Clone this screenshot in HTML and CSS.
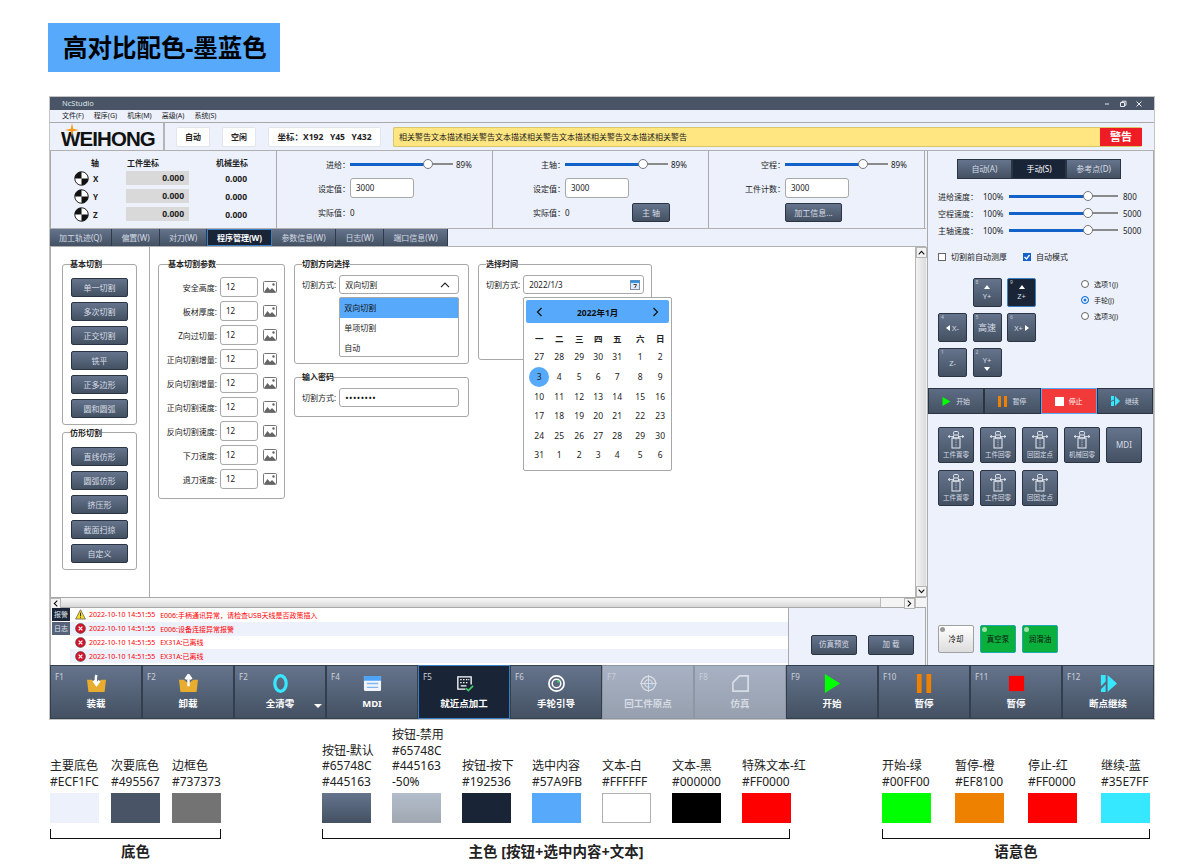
FILE: index.html
```html
<!DOCTYPE html>
<html lang="zh-CN">
<head>
    <meta charset="UTF-8">
    <meta name="viewport" content="width=device-width, initial-scale=1.0">
    <title>高对比配色-墨蓝色</title>
    <link rel="stylesheet" href="styles.css">
</head>
<body>
    <h1 class="page-title">高对比配色-墨蓝色</h1>

    <div class="app">
        <div class="titlebar">
            <span>NcStudio</span>
            <div class="win-btns">
                <svg width="8" height="8" viewBox="0 0 8 8"><path d="M2 4h4" stroke="#e6e9ef" stroke-width="1"/></svg>
                <svg width="8" height="8" viewBox="0 0 8 8"><path d="M1.5 2.5h4v4h-4zM3 2.5V1.2h4v4H5.5" fill="none" stroke="#e6e9ef" stroke-width="1"/></svg>
                <svg width="8" height="8" viewBox="0 0 8 8"><path d="M1.5 1.5l5 5M6.5 1.5l-5 5" stroke="#e6e9ef" stroke-width="1"/></svg>
            </div>
        </div>
        <div class="menubar">
            <span>文件(F)</span><span>程序(G)</span><span>机床(M)</span><span>高级(A)</span><span>系统(S)</span>
        </div>
        <div class="toolbar">
            <div class="logo">
                <span>WEIHONG</span>
                <svg class="logo-star" width="14" height="14" viewBox="0 0 14 14"><path d="M7 0l1.200 5.800L14 7l-5.800 1.200L7 14 5.800 8.200 0 7l5.800-1.200z" fill="#f39a1e"/></svg>
            </div>
            <div class="tool-items">
                <span class="tool-chip chip-s">自动</span>
                <span class="tool-chip chip-s">空闲</span>
                <span class="tool-chip chip-l">坐标：X192&nbsp;&nbsp;&nbsp;Y45&nbsp;&nbsp;&nbsp;Y432</span>
                <div class="warn-bar">
                    <span class="warn-text">相关警告文本描述相关警告文本描述相关警告文本描述相关警告文本描述相关警告</span>
                    <span class="warn-tag">警告</span>
                </div>
            </div>
        </div>

        <div class="workspace">
            <div class="left">
                <div class="top-panel">
                    <div class="axis-panel">
                        <div class="axis-row axis-head"><span class="axis-name">轴</span><span class="axis-work">工件坐标</span><span class="axis-mach">机械坐标</span></div>
                        <div class="axis-row"><svg class="axis-icon" viewBox="0 0 16 16"><circle cx="8" cy="8" r="7.200" fill="#fff" stroke="#111"/><path d="M8 8V.8A7.200 7.200 0 0 0 .8 8zM8 8v7.200A7.200 7.200 0 0 0 15.200 8z" fill="#111"/></svg><span class="axis-name">X</span><span class="axis-work axis-val">0.000</span><span class="axis-mach axis-num">0.000</span></div>
                        <div class="axis-row"><svg class="axis-icon" viewBox="0 0 16 16"><circle cx="8" cy="8" r="7.200" fill="#fff" stroke="#111"/><path d="M8 8V.8A7.200 7.200 0 0 0 .8 8zM8 8v7.200A7.200 7.200 0 0 0 15.200 8z" fill="#111"/></svg><span class="axis-name">Y</span><span class="axis-work axis-val">0.000</span><span class="axis-mach axis-num">0.000</span></div>
                        <div class="axis-row"><svg class="axis-icon" viewBox="0 0 16 16"><circle cx="8" cy="8" r="7.200" fill="#fff" stroke="#111"/><path d="M8 8V.8A7.200 7.200 0 0 0 .8 8zM8 8v7.200A7.200 7.200 0 0 0 15.200 8z" fill="#111"/></svg><span class="axis-name">Z</span><span class="axis-work axis-val">0.000</span><span class="axis-mach axis-num">0.000</span></div>
                    </div>
                    <div class="rate-panel rate-first">
                        <div class="rate-row"><label>进给：</label><div class="slider rate-slider"><i class="fill"></i><i class="thumb"></i></div><span class="pct">89%</span></div>
                        <div class="rate-row"><label>设定值：</label><span class="field rate-field">3000</span></div>
                        <div class="rate-row"><label>实际值：</label><span>0</span></div>
                    </div>
                    <div class="rate-panel">
                        <div class="rate-row"><label>主轴：</label><div class="slider rate-slider"><i class="fill"></i><i class="thumb"></i></div><span class="pct">89%</span></div>
                        <div class="rate-row"><label>设定值：</label><span class="field rate-field">3000</span></div>
                        <div class="rate-row"><label>实际值：</label><span class="rate-zero">0</span><span class="btn btn-spindle">主 轴</span></div>
                    </div>
                    <div class="rate-panel rate-wide">
                        <div class="rate-row"><label>空程：</label><div class="slider rate-slider"><i class="fill"></i><i class="thumb"></i></div><span class="pct">89%</span></div>
                        <div class="rate-row"><label>工件计数：</label><span class="field rate-field">3000</span></div>
                        <div class="rate-row"><label></label><span class="btn btn-info">加工信息...</span></div>
                    </div>
                </div>

                <div class="tabs">
                    <span class="tab tab-62">加工轨迹(Q)</span>
                    <span class="tab tab-48">偏置(W)</span>
                    <span class="tab tab-47">对刀(W)</span>
                    <span class="tab tab-65 tab-on">程序管理(W)</span>
                    <span class="tab tab-64">参数信息(W)</span>
                    <span class="tab tab-48">日志(W)</span>
                    <span class="tab tab-64">端口信息(W)</span>
                </div>

                <div class="content">
                    <div class="nav">
                        <fieldset class="group">
                            <legend>基本切割</legend>
                            <div class="nav-list">
                                <span class="btn">单一切割</span>
                                <span class="btn">多次切割</span>
                                <span class="btn">正交切割</span>
                                <span class="btn">铣平</span>
                                <span class="btn">正多边形</span>
                                <span class="btn">圆和圆弧</span>
                            </div>
                        </fieldset>
                        <fieldset class="group">
                            <legend>仿形切割</legend>
                            <div class="nav-list">
                                <span class="btn">直线仿形</span>
                                <span class="btn">圆弧仿形</span>
                                <span class="btn">挤压形</span>
                                <span class="btn">截面扫掠</span>
                                <span class="btn">自定义</span>
                            </div>
                        </fieldset>
                    </div>

                    <div class="panes">
                        <fieldset class="group params">
                            <legend>基本切割参数</legend>
                            <div class="param-list" id="paramList"></div>
                        </fieldset>

                        <div class="pane-col">
                            <fieldset class="group dir-box">
                                <legend>切割方向选择</legend>
                                <div class="form-row">
                                    <label>切割方式:</label>
                                    <div class="field select-field">
                                        <span>双向切割</span>
                                        <svg width="10" height="6" viewBox="0 0 10 6"><path d="M1 5.200L5 1.200l4 4" fill="none" stroke="#222" stroke-width="1.200"/></svg>
                                        <div class="dropdown">
                                            <div class="drop-item drop-on">双向切割</div>
                                            <div class="drop-item">单项切割</div>
                                            <div class="drop-item">自动</div>
                                        </div>
                                    </div>
                                </div>
                            </fieldset>
                            <fieldset class="group pass-box">
                                <legend>输入密码</legend>
                                <div class="form-row">
                                    <label>切割方式:</label>
                                    <div class="field select-field pass-field">••••••••</div>
                                </div>
                            </fieldset>
                        </div>

                        <fieldset class="group time-box">
                            <legend>选择时间</legend>
                            <div class="form-row">
                                <label>切割方式:</label>
                                <div class="field date-field">
                                    <span>2022/1/3</span>
                                    <svg width="10" height="10" viewBox="0 0 10 10"><rect x=".5" y=".5" width="9" height="9" fill="#dfe8f5" stroke="#7f8fa3"/><rect x=".5" y=".5" width="9" height="2.400" fill="#2d8fe0"/><path d="M3.500 4.500h3L4.800 8" fill="none" stroke="#333" stroke-width=".9"/></svg>
                                    <div class="calendar">
                                        <div class="cal-head">
                                            <svg width="7" height="10" viewBox="0 0 7 10"><path d="M5.500 1L1.500 5l4 4" fill="none" stroke="#111" stroke-width="1.200"/></svg>
                                            <b>2022年1月</b>
                                            <svg width="7" height="10" viewBox="0 0 7 10"><path d="M1.500 1l4 4-4 4" fill="none" stroke="#111" stroke-width="1.200"/></svg>
                                        </div>
                                        <div class="cal-grid" id="calGrid"></div>
                                    </div>
                                </div>
                            </div>
                        </fieldset>
                    </div>

                    <div class="vscroll">
                        <span class="sb-btn"><svg width="7" height="5" viewBox="0 0 7 5"><path d="M.7 4.300l2.800-3 2.800 3" fill="none" stroke="#111" stroke-width="1.100"/></svg></span>
                        <span class="sb-thumb-v"></span>
                        <span class="sb-btn"><svg width="7" height="5" viewBox="0 0 7 5"><path d="M.7.7l2.800 3 2.800-3" fill="none" stroke="#111" stroke-width="1.100"/></svg></span>
                    </div>
                </div>

                <div class="hscroll">
                    <span class="sb-btn"><svg width="5" height="7" viewBox="0 0 5 7"><path d="M4.300.7l-3 2.800 3 2.800" fill="none" stroke="#111" stroke-width="1.100"/></svg></span>
                    <span class="sb-thumb-h"></span>
                    <span class="sb-track"></span>
                    <span class="sb-btn"><svg width="5" height="7" viewBox="0 0 5 7"><path d="M.7.7l3 2.800-3 2.800" fill="none" stroke="#111" stroke-width="1.100"/></svg></span>
                    <span class="sb-corner"></span>
                </div>

                <div class="log-area">
                    <div class="log-tabs">
                        <span class="log-tab log-tab-on">报警</span>
                        <span class="log-tab">日志</span>
                    </div>
                    <div class="log-list">
                        <div class="log-row"><svg class="log-icon" viewBox="0 0 12 12"><path d="M6 .8l5.400 10.200H.6z" fill="#f4d92a" stroke="#555" stroke-width=".8"/><path d="M6 4v4M6 9v1" stroke="#222"/></svg><span>2022-10-10 14:51:55</span><span>E006:手柄通讯异常，请检查USB天线是否政策插入</span></div>
                        <div class="log-row"><svg class="log-icon" viewBox="0 0 12 12"><circle cx="6" cy="6" r="5.400" fill="#d3142a" stroke="#444" stroke-width=".6"/><path d="M4 4l4 4M8 4l-4 4" stroke="#fff" stroke-width="1.400"/></svg><span>2022-10-10 14:51:55</span><span>E006:设备连接异常报警</span></div>
                        <div class="log-row"><svg class="log-icon" viewBox="0 0 12 12"><circle cx="6" cy="6" r="5.400" fill="#d3142a" stroke="#444" stroke-width=".6"/><path d="M4 4l4 4M8 4l-4 4" stroke="#fff" stroke-width="1.400"/></svg><span>2022-10-10 14:51:55</span><span>EX31A:已离线</span></div>
                        <div class="log-row"><svg class="log-icon" viewBox="0 0 12 12"><circle cx="6" cy="6" r="5.400" fill="#d3142a" stroke="#444" stroke-width=".6"/><path d="M4 4l4 4M8 4l-4 4" stroke="#fff" stroke-width="1.400"/></svg><span>2022-10-10 14:51:55</span><span>EX31A:已离线</span></div>
                    </div>
                    <div class="log-actions">
                        <span class="btn">仿真预览</span>
                        <span class="btn">加 载</span>
                    </div>
                </div>
            </div>

            <div class="right">
                <div class="segment">
                    <span>自动(A)</span><span class="seg-on">手动(S)</span><span>参考点(D)</span>
                </div>
                <div class="speed-list">
                    <div class="speed-row"><label>进给速度：</label><span class="speed-pct">100%</span><div class="slider speed-slider"><i class="fill"></i><i class="thumb"></i></div><span>800</span></div>
                    <div class="speed-row"><label>空程速度：</label><span class="speed-pct">100%</span><div class="slider speed-slider"><i class="fill"></i><i class="thumb"></i></div><span>5000</span></div>
                    <div class="speed-row"><label>主轴速度：</label><span class="speed-pct">100%</span><div class="slider speed-slider"><i class="fill"></i><i class="thumb"></i></div><span>5000</span></div>
                </div>
                <div class="checks">
                    <span class="check"><i class="box"></i>切割前自动测厚</span>
                    <span class="check"><i class="box box-on"><svg width="8" height="8" viewBox="0 0 8 8"><path d="M1.500 4l2 2 3-4" fill="none" stroke="#fff" stroke-width="1.300"/></svg></i>自动模式</span>
                </div>
                <div class="jog-area">
                    <div class="jog-grid">
                        <span class="jog jog-empty"></span>
                        <span class="jog"><em>8</em><i class="tri-up"></i>Y+</span>
                        <span class="jog jog-on"><em>9</em><i class="tri-up"></i>Z+</span>
                        <span class="jog jog-row"><em>4</em><i class="tri-left"></i>X-</span>
                        <span class="jog jog-big"><em>5</em>高速</span>
                        <span class="jog jog-row"><em>6</em>X+<i class="tri-right"></i></span>
                        <span class="jog"><em>1</em>Z-</span>
                        <span class="jog"><em>2</em>Y+<i class="tri-down"></i></span>
                    </div>
                    <div class="radios">
                        <span class="radio"><i class="dot"></i>选项1(J)</span>
                        <span class="radio"><i class="dot dot-on"></i>手轮(J)</span>
                        <span class="radio"><i class="dot"></i>选项3(J)</span>
                    </div>
                </div>
                <div class="run-bar">
                    <span class="run-btn"><svg width="9" height="9" viewBox="0 0 9 9"><path d="M.5 0l8 4.500-8 4.500z" fill="#00ff00"/></svg>开始</span>
                    <span class="run-btn"><svg width="9" height="11" viewBox="0 0 9 11"><path d="M0 0h3v11H0zM6 0h3v11H6z" fill="#ef8100"/></svg>暂停</span>
                    <span class="run-btn run-stop"><i class="stop-sq"></i>停止</span>
                    <span class="run-btn"><svg width="9" height="10" viewBox="0 0 9 10"><path d="M0 0h3v3.600L0 5zM0 6l3-1.400V10H0zM4 0l5 5-5 5z" fill="#35e7ff"/></svg>继续</span>
                </div>
                <div class="func-grid" id="funcGrid"></div>
                <div class="io-row">
                    <span class="io io-off"><i></i>冷却</span>
                    <span class="io"><i></i>真空泵</span>
                    <span class="io"><i></i>润滑油</span>
                </div>
            </div>
        </div>

        <div class="fkeys">
            <div class="fkey"><em>F1</em><svg viewBox="0 0 20 20"><path d="M0 6h5l5 4 5-4h5l-1.500 13h-17z" fill="#e8ad2e"/><path d="M10 1c-1 2-1 5 0 9M6.800 7l3.200 4.500L13.200 7" fill="none" stroke="#fff" stroke-width="2.600"/></svg><b>装载</b></div>
            <div class="fkey"><em>F2</em><svg viewBox="0 0 20 20"><path d="M0 6h5l5 4 5-4h5l-1.500 13h-17z" fill="#e8ad2e"/><path d="M10 13V3M6.800 5.500L10 1l3.200 4.500" fill="none" stroke="#fff" stroke-width="2.600"/></svg><b>卸载</b></div>
            <div class="fkey"><em>F2</em><svg viewBox="0 0 20 20"><ellipse cx="10" cy="10" rx="6" ry="8.200" fill="none" stroke="#35e7ff" stroke-width="3.400"/></svg><b>全清零</b><i class="fkey-drop"></i></div>
            <div class="fkey"><em>F4</em><svg viewBox="0 0 20 20"><rect x="1" y="2" width="18" height="16" rx="1.500" fill="#f1f5fb"/><path d="M1 3.500A1.500 1.500 0 0 1 2.500 2h15A1.500 1.500 0 0 1 19 3.500V7H1z" fill="#4da3f5"/><path d="M4 10h12M4 14h12" stroke="#7fb6ec" stroke-width="1.400"/></svg><b>MDI</b></div>
            <div class="fkey fkey-on"><em>F5</em><svg viewBox="0 0 20 20"><path d="M11 16H3V3h14v8" fill="none" stroke="#fff" stroke-width="1.400"/><path d="M5.500 6H7M8.500 6H10M11.500 6H13M14 6h1M5.500 9H7M8.500 9H10M11.500 9H13M6 12.500h6" stroke="#fff" stroke-width="1.300"/><path d="M11.500 15l2.500 2.500 5-5" fill="none" stroke="#3fd06a" stroke-width="1.800"/></svg><b>就近点加工</b></div>
            <div class="fkey"><em>F6</em><svg viewBox="0 0 20 20"><circle cx="10" cy="10" r="8" fill="none" stroke="#fff" stroke-width="1.800"/><circle cx="10" cy="10" r="4.500" fill="none" stroke="#fff" stroke-width="1.600"/><circle cx="12" cy="8" r="1.300" fill="#37d05f"/></svg><b>手轮引导</b></div>
            <div class="fkey fkey-off"><em>F7</em><svg viewBox="0 0 20 20"><circle cx="10" cy="10" r="7.500" fill="none" stroke="#fff" stroke-width="1.400"/><circle cx="10" cy="10" r="4" fill="none" stroke="#fff" stroke-width="1.200"/><path d="M10 1v18M1 10h18" stroke="#fff" stroke-width="1"/><rect x="11" y="11" width="3" height="3" fill="#3d8fe8"/></svg><b>回工件原点</b></div>
            <div class="fkey fkey-off"><em>F8</em><svg viewBox="0 0 20 20"><path d="M2 18V9l7-7h9v16z" fill="none" stroke="#fff" stroke-width="1.800"/></svg><b>仿真</b></div>
            <div class="fkey"><em>F9</em><svg viewBox="0 0 20 20"><path d="M2 0l16 10L2 20z" fill="#00ff00"/></svg><b>开始</b></div>
            <div class="fkey"><em>F10</em><svg viewBox="0 0 20 20"><path d="M2 0h5v20H2zM12 0h5v20h-5z" fill="#ef8100"/></svg><b>暂停</b></div>
            <div class="fkey"><em>F11</em><svg viewBox="0 0 20 20"><rect x="2" y="2" width="16" height="16" fill="#ff0000"/></svg><b>暂停</b></div>
            <div class="fkey"><em>F12</em><svg viewBox="0 0 20 20"><path d="M2 1h5v7l-5 5zM7 11v8H2v-3zM9 1l10 9-10 9z" fill="#35e7ff"/></svg><b>断点继续</b></div>
        </div>
    </div>

    <div class="legend">
        <div class="legend-group group-base">
            <div class="swatches">
                <div class="swatch-item"><p>主要底色<br>#ECF1FC</p><i class="swatch sw-base"></i></div>
                <div class="swatch-item"><p>次要底色<br>#495567</p><i class="swatch sw-second"></i></div>
                <div class="swatch-item"><p>边框色<br>#737373</p><i class="swatch sw-border"></i></div>
            </div>
            <div class="bracket"></div>
            <div class="legend-name">底色</div>
        </div>
        <div class="legend-group group-main">
            <div class="swatches">
                <div class="swatch-item"><p>按钮-默认<br>#65748C<br>#445163</p><i class="swatch sw-default"></i></div>
                <div class="swatch-item"><p>按钮-禁用<br>#65748C<br>#445163<br>-50%</p><i class="swatch sw-disabled"></i></div>
                <div class="swatch-item"><p>按钮-按下<br>#192536</p><i class="swatch sw-pressed"></i></div>
                <div class="swatch-item"><p>选中内容<br>#57A9FB</p><i class="swatch sw-selected"></i></div>
                <div class="swatch-item"><p>文本-白<br>#FFFFFF</p><i class="swatch sw-white"></i></div>
                <div class="swatch-item"><p>文本-黑<br>#000000</p><i class="swatch sw-black"></i></div>
                <div class="swatch-item"><p>特殊文本-红<br>#FF0000</p><i class="swatch sw-red"></i></div>
            </div>
            <div class="bracket"></div>
            <div class="legend-name">主色 [按钮+选中内容+文本]</div>
        </div>
        <div class="legend-group group-sem">
            <div class="swatches">
                <div class="swatch-item"><p>开始-绿<br>#00FF00</p><i class="swatch sw-green"></i></div>
                <div class="swatch-item"><p>暂停-橙<br>#EF8100</p><i class="swatch sw-orange"></i></div>
                <div class="swatch-item"><p>停止-红<br>#FF0000</p><i class="swatch sw-red"></i></div>
                <div class="swatch-item"><p>继续-蓝<br>#35E7FF</p><i class="swatch sw-cyan"></i></div>
            </div>
            <div class="bracket"></div>
            <div class="legend-name">语意色</div>
        </div>
    </div>

    <script>
        const paramNames = ['安全高度:', '板材厚度:', 'Z向过切量:', '正向切割增量:', '反向切割增量:', '正向切割速度:', '反向切割速度:', '下刀速度:', '退刀速度:'];
        const paramList = document.getElementById('paramList');
        paramNames.forEach((name) => {
            const row = document.createElement('div');
            row.className = 'param-row';
            row.innerHTML = `<label>${name}</label><span class="field param-field">12</span>` +
                '<svg width="14" height="12" viewBox="0 0 14 12"><rect x=".5" y=".5" width="13" height="11" rx="1" fill="#fff" stroke="#777"/><path d="M1 11l3.500-5 2.500 3 2-2 4 4z" fill="#666"/><circle cx="10.500" cy="3.500" r="1.200" fill="#666"/></svg>';
            paramList.appendChild(row);
        });

        const weekNames = ['一', '二', '三', '四', '五', '六', '日'];
        const dayNumbers = [27, 28, 29, 30, 31, 1, 2, 3, 4, 5, 6, 7, 8, 9, 10, 11, 12, 13, 14, 15, 16, 17, 18, 19, 20, 21, 22, 23, 24, 25, 26, 27, 28, 29, 30, 31, 1, 2, 3, 4, 5, 6];
        const calGrid = document.getElementById('calGrid');
        weekNames.forEach((name) => {
            const cell = document.createElement('span');
            cell.className = 'cal-week';
            cell.textContent = name;
            calGrid.appendChild(cell);
        });
        dayNumbers.forEach((day, index) => {
            const cell = document.createElement('span');
            cell.className = index === 7 ? 'cal-day cal-today' : 'cal-day';
            cell.textContent = day;
            calGrid.appendChild(cell);
        });

        const funcNames = ['工件置零', '工件回零', '回固定点', '机械回零', 'MDI', '工件置零', '工件回零', '回固定点'];
        const funcGrid = document.getElementById('funcGrid');
        funcNames.forEach((name) => {
            const item = document.createElement('span');
            item.className = 'func';
            if (name === 'MDI') {
                item.classList.add('func-text');
                item.textContent = name;
            } else {
                item.innerHTML = '<svg width="20" height="20" viewBox="0 0 20 20"><path d="M2 6.500h5M13 6.500h5M2 6.500l2-1.200M2 6.500l2 1.200M18 6.500l-2-1.200M18 6.500l-2 1.200" fill="none" stroke="#e8ecf2" stroke-width=".8"/><rect x="7.500" y="1.500" width="5" height="3.500" rx="1.200" fill="none" stroke="#e8ecf2"/><path d="M8 5l-1 3h6l-1-3" fill="none" stroke="#e8ecf2"/><rect x="6" y="8" width="8" height="10" fill="none" stroke="#e8ecf2"/><path d="M10 9v8" stroke="#e8ecf2" stroke-width=".6" stroke-dasharray="1.500 1"/></svg>' + `<span>${name}</span>`;
            }
            funcGrid.appendChild(item);
        });
    </script>
</body>
</html>
```

FILE: styles.css
```css
* {
    margin: 0;
    padding: 0;
    box-sizing: border-box;
}

body {
    width: 1200px;
    height: 866px;
    overflow: hidden;
    background: #fff;
    color: #222;
    font-family: "Noto Sans", "Noto Sans CJK SC", sans-serif;
    font-size: 8px;
    padding-top: 23px;
}

i, em {
    font-style: normal;
}

.page-title {
    width: 232px;
    height: 49px;
    margin-left: 48px;
    padding-left: 15px;
    background: #57a9fb;
    color: #000;
    font-size: 24.5px;
    font-weight: 700;
    line-height: 49px;
}

/* window */
.app {
    width: 1104px;
    height: 622px;
    margin: 25px 0 0 50px;
    background: #ecf1fc;
    box-shadow: 0 0 0 1px #c4c4c4;
    display: flex;
    flex-direction: column;
}

.titlebar {
    height: 13px;
    padding: 0 11px 0 12px;
    background: #495567;
    color: #dfe3ea;
    font-size: 7.5px;
    line-height: 13px;
    display: flex;
    justify-content: space-between;
    align-items: center;
}

.win-btns {
    display: flex;
    gap: 8px;
}

.menubar {
    height: 13px;
    padding-left: 12px;
    border-bottom: 1px solid #a8a8a8;
    font-size: 7px;
    line-height: 12px;
    display: flex;
    gap: 10px;
}

.toolbar {
    height: 27px;
    display: flex;
}

.logo {
    position: relative;
    width: 115px;
    padding-left: 11px;
    border-right: 2px solid #b4b4b4;
    color: #111;
    font-family: "Liberation Sans", sans-serif;
    font-size: 20.5px;
    font-weight: 700;
    letter-spacing: -0.9px;
    line-height: 31px;
}

.logo-star {
    position: absolute;
    left: 15px;
    top: 0;
}

.tool-items {
    flex: 1;
    padding: 4px 12px 3px 11px;
    display: flex;
    gap: 12px;
}

.tool-chip {
    background: #fff;
    border: 1px solid #e2e5ea;
    border-radius: 2px;
    font-weight: 700;
    line-height: 18px;
    text-align: center;
}

.chip-s {
    width: 34px;
}

.chip-l {
    width: 113px;
    font-size: 8.5px;
}

.warn-bar {
    flex: 1;
    display: flex;
    background: #ffe680;
    border: 1px solid #d8c66a;
    border-right: none;
    border-radius: 2px;
}

.warn-text {
    flex: 1;
    padding-left: 5px;
    line-height: 18px;
}

.warn-tag {
    width: 42px;
    background: #ee1c25;
    color: #fff;
    font-size: 11px;
    font-weight: 700;
    line-height: 18px;
    text-align: center;
}

.workspace {
    flex: 1;
    min-height: 0;
    border-top: 1px solid #b0b0b0;
    display: flex;
}

.left {
    width: 876px;
    display: flex;
    flex-direction: column;
}

/* top readouts */
.top-panel {
    height: 77px;
    display: flex;
}

.axis-panel {
    width: 227px;
    padding-top: 5px;
    border-left: 1px solid #aaa;
    border-right: 1px solid #aaa;
}

.axis-row {
    height: 18px;
    display: flex;
    align-items: center;
    font-weight: 700;
}

.axis-head {
    height: 13px;
    margin-bottom: 0;
}

.axis-icon {
    width: 15px;
    height: 15px;
    margin-left: 23px;
}

.axis-name {
    width: 37px;
    padding-left: 4px;
}

.axis-head .axis-name {
    width: 76px;
    padding-left: 40px;
}

.axis-work {
    width: 63px;
}

.axis-val {
    height: 14px;
    padding-right: 5px;
    background: #d9d9d9;
    font-size: 8.5px;
    line-height: 14px;
    text-align: right;
}

.axis-mach {
    width: 58px;
    text-align: right;
    white-space: nowrap;
}

.axis-num {
    font-size: 8.5px;
}

.rate-panel {
    width: 216px;
    padding-top: 1px;
    border-right: 1px solid #aaa;
    display: flex;
    flex-direction: column;
}

.rate-row {
    height: 24px;
    display: flex;
    align-items: center;
}

.rate-row label {
    width: 72px;
    text-align: right;
    flex-shrink: 0;
}

.rate-first .rate-row label {
    width: 73px;
}

.rate-wide .rate-row label {
    width: 76px;
}

.rate-zero {
    width: 67px;
}

.slider {
    position: relative;
    height: 2px;
    background: #8a8a8a;
}

.slider .fill {
    position: absolute;
    left: 0;
    top: -0.5px;
    height: 3px;
    background: #1261c9;
}

.slider .thumb {
    position: absolute;
    top: -4px;
    width: 10px;
    height: 10px;
    background: #fff;
    border: 1px solid #777;
    border-radius: 50%;
}

.rate-slider {
    width: 103px;
    margin-right: 3px;
}

.rate-slider .fill {
    width: 74px;
}

.rate-slider .thumb {
    left: 73px;
}

.field {
    background: #fff;
    border: 1px solid #a8a8a8;
    border-radius: 3px;
}

.rate-field {
    width: 64px;
    height: 20px;
    padding-left: 5px;
    line-height: 18px;
}

.btn {
    background: linear-gradient(#65748c, #445163);
    border: 1px solid #2a3443;
    border-radius: 2px;
    color: #d7dde6;
    text-align: center;
    line-height: 17px;
}

.btn-spindle {
    width: 38px;
    height: 19px;
}

.btn-info {
    width: 57px;
    height: 19px;
}

/* tabs */
.tabs {
    height: 19px;
    border-bottom: 1px solid #b0b0b0;
    border-top: 1px solid #b0b0b0;
    display: flex;
}

.tab {
    background: linear-gradient(#65748c, #445163);
    border-right: 1px solid #2f3a4a;
    color: #d3d9e2;
    line-height: 17px;
    text-align: center;
}

.tab-47 { width: 47px; }
.tab-48 { width: 48px; }
.tab-62 { width: 62px; }
.tab-64 { width: 64px; }
.tab-65 { width: 65px; }

.tab-on {
    background: #192536;
    border: 1px solid #3c7fc0;
    color: #fff;
    font-weight: 700;
    line-height: 15px;
}

/* content */
.content {
    height: 350px;
    background: #fff;
    display: flex;
}

.group {
    min-width: 0;
    border: 1px solid #a8a8a8;
    border-radius: 3px;
}

.group legend {
    height: 12px;
    font-weight: 700;
    line-height: 12px;
}

.nav {
    width: 100px;
    padding: 11px 0 0 11px;
    border-left: 1px solid #aaa;
    border-right: 1px solid #aaa;
    flex-shrink: 0;
}

.nav .group {
    width: 75px;
    padding: 8px 8px 6px;
    margin-bottom: 2px;
}

.nav .group legend {
    margin-left: -1px;
}

.nav-list {
    display: flex;
    flex-direction: column;
    gap: 5.2px;
}

.nav-list .btn {
    height: 19px;
}

.panes {
    flex: 1;
    padding: 11px 0 0 8px;
    display: flex;
    gap: 9px;
    align-items: flex-start;
}

.params {
    width: 127px;
    padding: 7px 0 9px 0;
}

.params legend {
    margin-left: 9px;
}

.param-list {
    display: flex;
    flex-direction: column;
    gap: 4px;
}

.param-row {
    height: 20px;
    display: flex;
    align-items: center;
}

.param-row label {
    width: 58px;
    text-align: right;
    white-space: nowrap;
    margin-right: 3px;
}

.param-field {
    width: 38px;
    height: 20px;
    padding-left: 5px;
    margin-right: 5px;
    line-height: 18px;
}

.pane-col {
    width: 175px;
    display: flex;
    flex-direction: column;
    gap: 7px;
}

.form-row {
    display: flex;
    align-items: center;
    gap: 3px;
}

.form-row label {
    white-space: nowrap;
}

.dir-box {
    height: 106px;
    padding: 5px 0 0 7px;
}

.pass-box {
    height: 46px;
    padding: 5px 0 0 7px;
}

.select-field {
    position: relative;
    width: 120px;
    height: 19px;
    padding: 0 8px 0 5px;
    display: flex;
    justify-content: space-between;
    align-items: center;
}

.pass-field {
    color: #111;
    font-size: 9px;
    letter-spacing: 0.5px;
}

.dropdown {
    position: absolute;
    left: -1px;
    top: 21px;
    width: 120px;
    height: 60px;
    background: #fff;
    border: 1px solid #a8a8a8;
    border-radius: 2px;
    z-index: 3;
}

.drop-item {
    height: 20px;
    padding-left: 4px;
    line-height: 20px;
}

.drop-on {
    background: #57a9fb;
    color: #111;
}

.time-box {
    width: 174px;
    height: 102px;
    padding: 5px 0 0 7px;
}

.date-field {
    position: relative;
    width: 121px;
    height: 19px;
    padding: 0 3px 0 5px;
    display: flex;
    justify-content: space-between;
    align-items: center;
}

.calendar {
    position: absolute;
    left: -1px;
    top: 21px;
    width: 149px;
    height: 174px;
    padding: 2px;
    background: #fff;
    border: 1px solid #a8a8a8;
    border-radius: 2px;
    z-index: 3;
}

.cal-head {
    height: 23px;
    padding: 0 10px;
    background: #57a9fb;
    border-radius: 2px;
    color: #111;
    font-size: 8.5px;
    display: flex;
    justify-content: space-between;
    align-items: center;
}

.cal-grid {
    margin-top: 5px;
    padding-left: 3px;
    display: grid;
    grid-template-columns: 20px 20px 20px 18px 20px 26px 14px;
    grid-auto-rows: 19.6px;
    justify-items: center;
    align-items: center;
}

.cal-week {
    font-weight: 700;
    font-size: 8.5px;
}

.cal-day {
    width: 20px;
    height: 20px;
    flex-shrink: 0;
    line-height: 20px;
    text-align: center;
    font-size: 8.5px;
}

.cal-today {
    background: #57a9fb;
    border-radius: 50%;
}

.vscroll {
    width: 11px;
    background: linear-gradient(90deg, #f3f3f3, #dcdcdc);
    border-left: 1px solid #b5b5b5;
    display: flex;
    flex-direction: column;
    flex-shrink: 0;
}

.sb-btn {
    width: 11px;
    height: 11px;
    background: #f4f4f4;
    border: 1px solid #b5b5b5;
    display: flex;
    justify-content: center;
    align-items: center;
    flex-shrink: 0;
}

.sb-thumb-v {
    flex: 1;
}

.hscroll {
    height: 11px;
    background: #f4f4f4;
    border-top: 1px solid #a8a8a8;
    border-bottom: 1px solid #a8a8a8;
    display: flex;
}

.sb-thumb-h {
    width: 820px;
    background: linear-gradient(#f8f8f8, #d8d8d8);
    border-right: 1px solid #bbb;
}

.sb-track {
    flex: 1;
}

.sb-corner {
    width: 11px;
    border-left: 1px solid #bbb;
}

/* log */
.log-area {
    flex: 1;
    display: flex;
}

.log-tabs {
    width: 20px;
    padding-left: 1px;
    border-left: 1px solid #aaa;
    background: #fff;
    display: flex;
    flex-direction: column;
    gap: 1px;
}

.log-tab {
    height: 13px;
    background: #55627a;
    color: #dfe4ec;
    font-size: 7px;
    line-height: 13px;
    text-align: center;
}

.log-tab-on {
    background: #192536;
}

.log-list {
    width: 718px;
    background: #fff;
}

.log-row {
    height: 13.75px;
    padding-left: 5px;
    color: #f00;
    font-size: 7px;
    display: flex;
    align-items: center;
    gap: 5px;
}

.log-row:nth-child(even) {
    background: #ecf1fc;
}

.log-row svg {
    margin-right: -2px;
}

.log-icon {
    width: 11px;
    height: 11px;
}

.log-actions {
    flex: 1;
    padding: 27px 11px 0 22px;
    border-left: 1px solid #aaa;
    border-right: 1px solid #aaa;
    display: flex;
    gap: 11px;
}

.log-actions .btn {
    width: 46px;
    height: 20px;
    font-size: 7.5px;
}

/* right column */
.right {
    flex: 1;
    margin-left: 1px;
    border-left: 1px solid #aaa;
    border-right: 1px solid #aaa;
    display: flex;
    flex-direction: column;
}

.segment {
    width: 164px;
    height: 20px;
    margin: 8px 0 0 29px;
    display: flex;
}

.segment span {
    flex: 1;
    background: linear-gradient(#65748c, #445163);
    border: 1px solid #2a3443;
    color: #d7dde6;
    line-height: 18px;
    text-align: center;
}

.segment .seg-on {
    background: #192536;
    color: #fff;
}

.speed-list {
    margin-top: 10px;
    padding-left: 10px;
    display: flex;
    flex-direction: column;
    gap: 3px;
}

.speed-row {
    height: 14px;
    display: flex;
    align-items: center;
}

.speed-row label {
    width: 45px;
}

.speed-pct {
    width: 26px;
}

.speed-slider {
    width: 109px;
    margin-right: 5px;
}

.speed-slider .fill {
    width: 79px;
}

.speed-slider .thumb {
    left: 74px;
}

.checks {
    margin-top: 14px;
    padding-left: 10px;
    display: flex;
    gap: 16px;
}

.check {
    display: flex;
    align-items: center;
    gap: 5px;
}

.box {
    width: 8px;
    height: 8px;
    background: #fff;
    border: 1px solid #666;
    display: flex;
}

.box-on {
    background: #1261c9;
    border-color: #1261c9;
}

.box-on svg {
    margin: -1px;
}

.jog-area {
    margin-top: 16px;
    padding-left: 10px;
    display: flex;
}

.jog-grid {
    width: 98px;
    display: grid;
    grid-template-columns: repeat(3, 29px);
    grid-auto-rows: 29px;
    column-gap: 5.5px;
    row-gap: 6px;
}

.jog {
    position: relative;
    background: linear-gradient(#65748c, #445163);
    border: 1px solid #2a3443;
    border-radius: 2px;
    color: #d7dde6;
    font-size: 7.5px;
    display: flex;
    flex-direction: column;
    justify-content: center;
    align-items: center;
    gap: 2px;
}

.jog-empty {
    visibility: hidden;
}

.jog-on {
    background: #192536;
    border-color: #3c7fc0;
}

.jog-row {
    flex-direction: row;
}

.jog-big {
    font-size: 9px;
}

.jog em {
    position: absolute;
    left: 2px;
    top: 0;
    font-size: 5px;
    color: #c4cad4;
}

.tri-up {
    width: 0;
    height: 0;
    border: 3.5px solid transparent;
    border-top: 0;
    border-bottom: 4px solid #fff;
}

.tri-down {
    width: 0;
    height: 0;
    border: 3.5px solid transparent;
    border-bottom: 0;
    border-top: 4px solid #fff;
}

.tri-left {
    width: 0;
    height: 0;
    border: 3.5px solid transparent;
    border-left: 0;
    border-right: 4px solid #fff;
}

.tri-right {
    width: 0;
    height: 0;
    border: 3.5px solid transparent;
    border-right: 0;
    border-left: 4px solid #fff;
}

.radios {
    margin: 0 0 0 45px;
    display: flex;
    flex-direction: column;
    gap: 5px;
    font-size: 7px;
}

.radio {
    height: 11px;
    display: flex;
    align-items: center;
    gap: 5px;
}

.dot {
    width: 8px;
    height: 8px;
    background: #fff;
    border: 1px solid #666;
    border-radius: 50%;
}

.dot-on {
    border-color: #1a73d9;
    box-shadow: inset 0 0 0 1.5px #fff;
    background: #1a73d9;
}

.run-bar {
    height: 26px;
    margin-top: 11px;
    display: flex;
}

.run-btn {
    flex: 1;
    background: linear-gradient(#5d6c83, #445163);
    border: 1px solid #2a3443;
    color: #d7dde6;
    font-size: 7px;
    display: flex;
    justify-content: center;
    align-items: center;
    gap: 5px;
}

.run-stop {
    background: #f23a3a;
    border-color: #57a9fb;
    color: #fff;
}

.stop-sq {
    width: 9px;
    height: 9px;
    background: #fff;
}

.func-grid {
    margin-top: 13px;
    padding-left: 10px;
    display: grid;
    grid-template-columns: repeat(5, 36px);
    grid-auto-rows: 36px;
    column-gap: 6px;
    row-gap: 7px;
}

.func {
    background: linear-gradient(#65748c, #445163);
    border: 1px solid #2a3443;
    border-radius: 2px;
    color: #d7dde6;
    font-size: 6.5px;
    display: flex;
    flex-direction: column;
    justify-content: flex-end;
    align-items: center;
    white-space: nowrap;
    line-height: 10px;
    padding-bottom: 2px;
}

.func-text {
    justify-content: center;
    padding-bottom: 0;
    font-size: 8px;
}

.io-row {
    margin: auto 0 12px 0;
    padding-left: 10px;
    display: flex;
    gap: 6px;
}

.io {
    position: relative;
    width: 36px;
    height: 28px;
    background: #0baf3b;
    border: 1px solid #1fa8a8;
    border-radius: 2px;
    color: #111;
    font-size: 7.5px;
    line-height: 27px;
    text-align: center;
}

.io i {
    position: absolute;
    left: 1px;
    top: 1px;
    width: 5px;
    height: 5px;
    background: #9de3a8;
    border-radius: 50%;
}

.io-off {
    background: linear-gradient(#fff, #dcdcdc);
    border-color: #a0a0a0;
}

.io-off i {
    background: #999;
}

/* function keys */
.fkeys {
    height: 54px;
    display: flex;
}

.fkey {
    position: relative;
    flex: 1;
    background: linear-gradient(#65748c, #445163);
    border: 1px solid #333e4f;
    color: #fff;
    display: flex;
    flex-direction: column;
    align-items: center;
}

.fkey em {
    position: absolute;
    left: 4px;
    top: 5px;
    font-size: 8px;
    color: #cdd3dc;
}

.fkey svg {
    width: 19px;
    height: 19px;
    margin-top: 8px;
}

.fkey b {
    margin-top: 4px;
    font-size: 9.5px;
    line-height: 14px;
}

.fkey-on {
    background: #192536;
    border-color: #3c7fc0;
}

.fkey-off {
    opacity: 0.5;
}

.fkey-off b,
.fkey-off em,
.fkey-off svg {
    opacity: 0.65;
}

.fkey-drop {
    position: absolute;
    right: 3px;
    bottom: 10px;
    width: 0;
    height: 0;
    border: 4px solid transparent;
    border-bottom: 0;
    border-top: 4px solid #fff;
}

/* colour legend */
.legend {
    height: 146px;
    padding-left: 50px;
    display: flex;
}

.legend-group {
    height: 100%;
    display: flex;
    flex-direction: column;
    align-items: flex-start;
}

.group-base {
    width: 171px;
    margin-right: 101px;
}

.group-main {
    width: 468px;
    margin-right: 92px;
}

.group-sem {
    width: 268px;
}

.swatches {
    height: 104px;
    display: flex;
    align-items: flex-end;
}

.swatch-item {
    width: 49px;
    margin-right: 21px;
    flex-shrink: 0;
}

.group-base .swatch-item {
    margin-right: 12px;
}

.group-sem .swatch-item {
    margin-right: 24px;
}

.swatch-item p {
    margin-bottom: 4px;
    font-size: 12px;
    line-height: 15.5px;
    white-space: nowrap;
}

.swatch {
    display: block;
    width: 49px;
    height: 30px;
}

.sw-base { background: #ecf1fc; }
.sw-second { background: #495567; }
.sw-border { background: #737373; }
.sw-default { background: linear-gradient(#65748c, #445163); }
.sw-disabled { background: linear-gradient(#b2bdcb, #a1a8b1); }
.sw-pressed { background: #192536; }
.sw-selected { background: #57a9fb; }
.sw-black { background: #000; }
.sw-red { background: #f00; }
.sw-green { background: #0f0; }
.sw-orange { background: #ef8100; }
.sw-cyan { background: #35e7ff; }

.sw-white {
    background: #fff;
    border: 1px solid #b0b0b0;
}

.bracket {
    width: 100%;
    height: 10px;
    margin-top: 6px;
    border: 1px solid #111;
    border-top: none;
}

.legend-name {
    width: 100%;
    margin-top: 4px;
    font-size: 14.5px;
    font-weight: 700;
    line-height: 16px;
    text-align: center;
}
```
